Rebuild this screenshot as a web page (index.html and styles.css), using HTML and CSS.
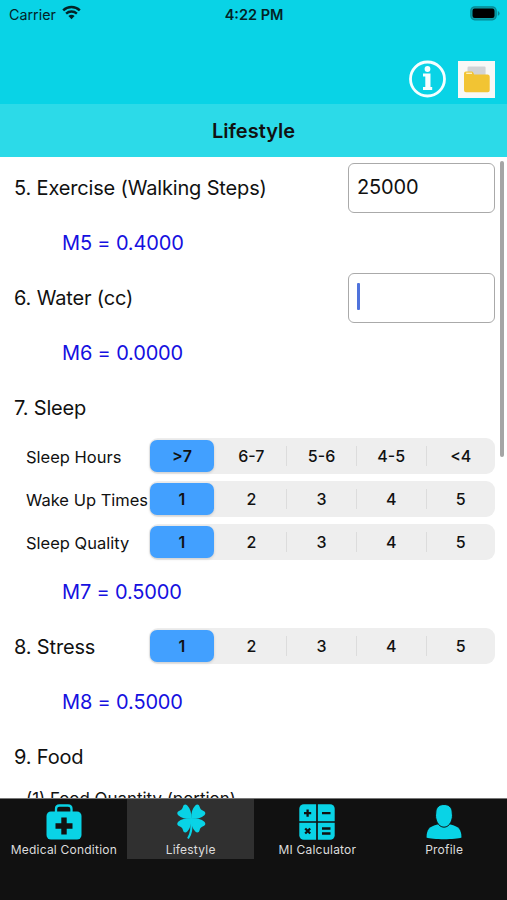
FILE: index.html
```
<!DOCTYPE html>
<html lang="en">

<head>
    <meta charset="UTF-8">
    <meta name="viewport" content="width=device-width, initial-scale=1.0">
    <title>Lifestyle</title>
    <link rel="stylesheet" href="styles.css">
</head>

<body>
    <header class="header">
        <div class="status-bar">
            <div class="carrier">
                <span>Carrier</span>
                <svg width="19" height="15" viewBox="0 0 19 15">
                    <path d="M1.2 5.4a12 12 0 0 1 16.6 0" fill="none" stroke="#032326" stroke-width="2.5" />
                    <path d="M4.1 8.6a8 8 0 0 1 10.8 0" fill="none" stroke="#032326" stroke-width="2.4" />
                    <path d="M6.4 11.1a4.6 4.6 0 0 1 6.2 0L9.5 14.2z" fill="#032326" />
                </svg>
            </div>
            <span class="time">4:22 PM</span>
            <svg class="battery" width="31" height="15" viewBox="0 0 31 15">
                <rect x=".8" y=".8" width="25.4" height="13" rx="4" fill="#0aa0ab" stroke="#078994" stroke-width="1.2" />
                <rect x="2.5" y="2.6" width="22" height="9.4" rx="2.2" fill="#000" />
                <path d="M27.8 5v4.8q1.8-.7 1.8-2.4T27.8 5z" fill="#078994" />
            </svg>
        </div>
        <div class="actions">
            <svg width="38" height="38" viewBox="0 0 38 38">
                <circle cx="19.5" cy="19" r="17" fill="none" stroke="#f5feff" stroke-width="2.8" />
                <circle cx="19.5" cy="9" r="2.9" fill="#f5feff" />
                <path d="M15 13.500h7.500v13.500h1.700v3h-9.200v-3h2.300V16.500H15z" fill="#f5feff" />
            </svg>
            <svg width="37" height="37" viewBox="0 0 37 37">
                <rect width="37" height="37" fill="#f8f8f6" />
                <path d="M9.5 6.800q0-1.300 1.300-1.300h15.500q1.300 0 1.300 1.300V20H9.500z" fill="#d2d3d5" />
                <path d="M6 12.500q0-2 2-2h6q1 0 1.700 2l.5 1h13.300q2.200 0 2.200 2v13.700q0 2-2 2H8q-2 0-2-2z" fill="#f2c433" />
                <path d="M8.200 12.300h5.800" stroke="#fff3c4" stroke-width="1.3" />
            </svg>
        </div>
    </header>
    <h1 class="title">Lifestyle</h1>

    <main class="content">
        <div class="row">
            <span class="label">5. Exercise (Walking Steps)</span>
            <div class="field">25000</div>
        </div>
        <div class="row result">M5 = 0.4000</div>
        <div class="row">
            <span class="label">6. Water (cc)</span>
            <div class="field"><span class="caret"></span></div>
        </div>
        <div class="row result">M6 = 0.0000</div>
        <div class="row"><span class="label">7. Sleep</span></div>
        <div class="row sub">
            <span class="label">Sleep Hours</span>
            <div class="segments">
                <span class="selected">&gt;7</span><span>6-7</span><span>5-6</span><span>4-5</span><span>&lt;4</span>
            </div>
        </div>
        <div class="row sub">
            <span class="label">Wake Up Times</span>
            <div class="segments">
                <span class="selected">1</span><span>2</span><span>3</span><span>4</span><span>5</span>
            </div>
        </div>
        <div class="row sub">
            <span class="label">Sleep Quality</span>
            <div class="segments">
                <span class="selected">1</span><span>2</span><span>3</span><span>4</span><span>5</span>
            </div>
        </div>
        <div class="row result">M7 = 0.5000</div>
        <div class="row">
            <span class="label">8. Stress</span>
            <div class="segments">
                <span class="selected">1</span><span>2</span><span>3</span><span>4</span><span>5</span>
            </div>
        </div>
        <div class="row result">M8 = 0.5000</div>
        <div class="row"><span class="label">9. Food</span></div>
        <div class="row sub food"><span class="label">(1) Food Quantity (portion)</span></div>
        <div class="scrollbar"></div>
    </main>

    <nav class="tabs">
        <div class="tab">
            <svg width="36" height="36" viewBox="0 0 36 36">
                <path d="M10 8V5q0-3.500 3.500-3.500h8.500q3.500 0 3.500 3.500v3" fill="none" stroke="#09d3e6" stroke-width="2.3" />
                <rect x=".5" y="7.500" width="35" height="28" rx="4.5" fill="#09d3e6" />
                <path d="M15.300 13.500h5.400v5.800h5.800v5.400h-5.800v5.800h-5.400v-5.800H9.500v-5.400h5.800z" fill="#111" />
            </svg>
            <span>Medical Condition</span>
        </div>
        <div class="tab active">
            <svg width="36" height="36" viewBox="0 0 36 36">
                <g fill="#09d3e6">
                    <path id="leaf" d="M18.500 14.800C14 15 8.500 14.500 5.200 11.200 3.500 9.300 4.300 7.500 6.500 6.700 8.500 6 9.500 4.800 10 2.800 10.600.5 12.500-.2 14.300 1.600 17.300 4.500 18.500 9 18.500 14.800z" />
                    <use href="#leaf" transform="matrix(-1 0 0 1 36.6 0)" />
                    <use href="#leaf" transform="matrix(1 0 0 -1 0 29)" />
                    <use href="#leaf" transform="matrix(-1 0 0 -1 36.6 29)" />
                </g>
                <path d="M18.300 14.500c.8 8.500 0 15.500-3.300 20" fill="none" stroke="#09d3e6" stroke-width="2.1" />
            </svg>
            <span>Lifestyle</span>
        </div>
        <div class="tab">
            <svg width="36" height="36" viewBox="0 0 36 36">
                <rect x=".3" y=".3" width="35.4" height="35.4" rx="4.5" fill="#09d3e6" />
                <path d="M18 0v36M0 18h36" stroke="#111" stroke-width="1.7" />
                <path d="M5 9.200h7.200M8.600 5.600v7.200M23 9.200h8.500M6.200 24.500l5 5M11.200 24.500l-5 5M23 24.500h8.500M23 29.500h8.500" stroke="#111" stroke-width="2.3" />
            </svg>
            <span>MI Calculator</span>
        </div>
        <div class="tab">
            <svg width="36" height="36" viewBox="0 0 36 36">
                <path d="M.5 33.500C.7 25 3.500 22.500 11.500 20.500h13C32.500 22.500 35.300 25 35.500 33.500 30 35.800 6 35.800.5 33.500z" fill="#09d3e6" />
                <path d="M18 .5c5 0 8.300 3 8.200 8.300C27.500 15 24 23.200 18 23.200S8.500 15 9.800 8.800C9.700 3.500 13 .5 18 .5z" fill="#09d3e6" stroke="#111" stroke-width="1" />
            </svg>
            <span>Profile</span>
        </div>
    </nav>
</body>

</html>
```

FILE: styles.css
```
* {
    box-sizing: border-box;
}

body {
    margin: 0;
    height: 900px;
    display: flex;
    flex-direction: column;
    overflow: hidden;
    background-color: #fff;
    color: #111;
    font-family: Inter, "Liberation Sans", sans-serif;
}

.header {
    height: 104px;
    background-color: #09d3e6;
}

.status-bar {
    display: grid;
    grid-template-columns: 1fr auto 1fr;
    align-items: center;
    height: 28px;
    padding: 0 8px 0 9px;
    font-size: 14.3px;
    color: #032326;
}

.carrier {
    display: flex;
    align-items: center;
    gap: 6px;
}

.carrier svg {
    margin-top: -3px;
}

.time {
    font-size: 14.5px;
    font-weight: 600;
}

.battery {
    justify-self: end;
    margin-top: -2px;
    margin-right: -2px;
}

.actions {
    display: flex;
    justify-content: flex-end;
    align-items: center;
    gap: 12px;
    height: 38px;
    margin-top: 32px;
    padding-right: 12px;
}

.title {
    height: 53px;
    margin: 0;
    background-color: #2cdae8;
    font-size: 20px;
    font-weight: 600;
    line-height: 54px;
    text-align: center;
}

.content {
    position: relative;
    height: 641px;
    padding: 3px 12px 0 14px;
    overflow: hidden;
}

.row {
    display: flex;
    align-items: center;
    justify-content: space-between;
    height: 55px;
    font-size: 20px;
    letter-spacing: -0.16px;
    white-space: nowrap;
}

.result {
    padding-left: 48px;
    color: #1510e0;
}

.sub {
    height: 43px;
    padding-left: 12px;
    font-size: 16.5px;
    letter-spacing: 0;
}

.food {
    height: 29px;
    font-size: 16.9px;
}

.field {
    display: flex;
    align-items: center;
    width: 147px;
    height: 50px;
    padding: 0 8px 2px;
    border: 1.5px solid #aaa;
    border-radius: 6px;
}

.caret {
    width: 3px;
    height: 27px;
    border-radius: 1px;
    background-color: #4f73dc;
}

.segments {
    display: grid;
    grid-template-columns: 67.5px 69.7px 69.7px 69.7px 1fr;
    align-items: center;
    flex: none;
    width: 346px;
    height: 36px;
    margin-top: -1px;
    border-radius: 9px;
    background-color: #eee;
    font-size: 16px;
    font-weight: 500;
    letter-spacing: 0;
    text-align: center;
}

.segments span {
    line-height: 20px;
}

.segments span + span + span {
    border-left: 1px solid #dcdcdc;
}

.segments .selected {
    width: 64px;
    margin-left: 1px;
    border-radius: 7px;
    background-color: #42a0ff;
    box-shadow: 0 1px 3px rgba(0, 0, 0, 0.15);
    font-weight: 600;
    line-height: 32px;
}

.scrollbar {
    position: absolute;
    top: 4px;
    right: 3px;
    width: 4px;
    height: 296px;
    border-radius: 2px;
    background-color: #a5a5a5;
}

.tabs {
    display: grid;
    grid-template-columns: repeat(4, 1fr);
    height: 102px;
    border-top: 1px solid #777;
    background-color: #111;
}

.tab {
    display: flex;
    flex-direction: column;
    align-items: center;
    height: 60px;
    padding-top: 5px;
    padding-left: 1px;
    color: #ddd;
    font-size: 12px;
    letter-spacing: 0.22px;
}

.tab span {
    margin-top: 2px;
    line-height: 15px;
}

.active {
    background-color: #303030;
}
```
